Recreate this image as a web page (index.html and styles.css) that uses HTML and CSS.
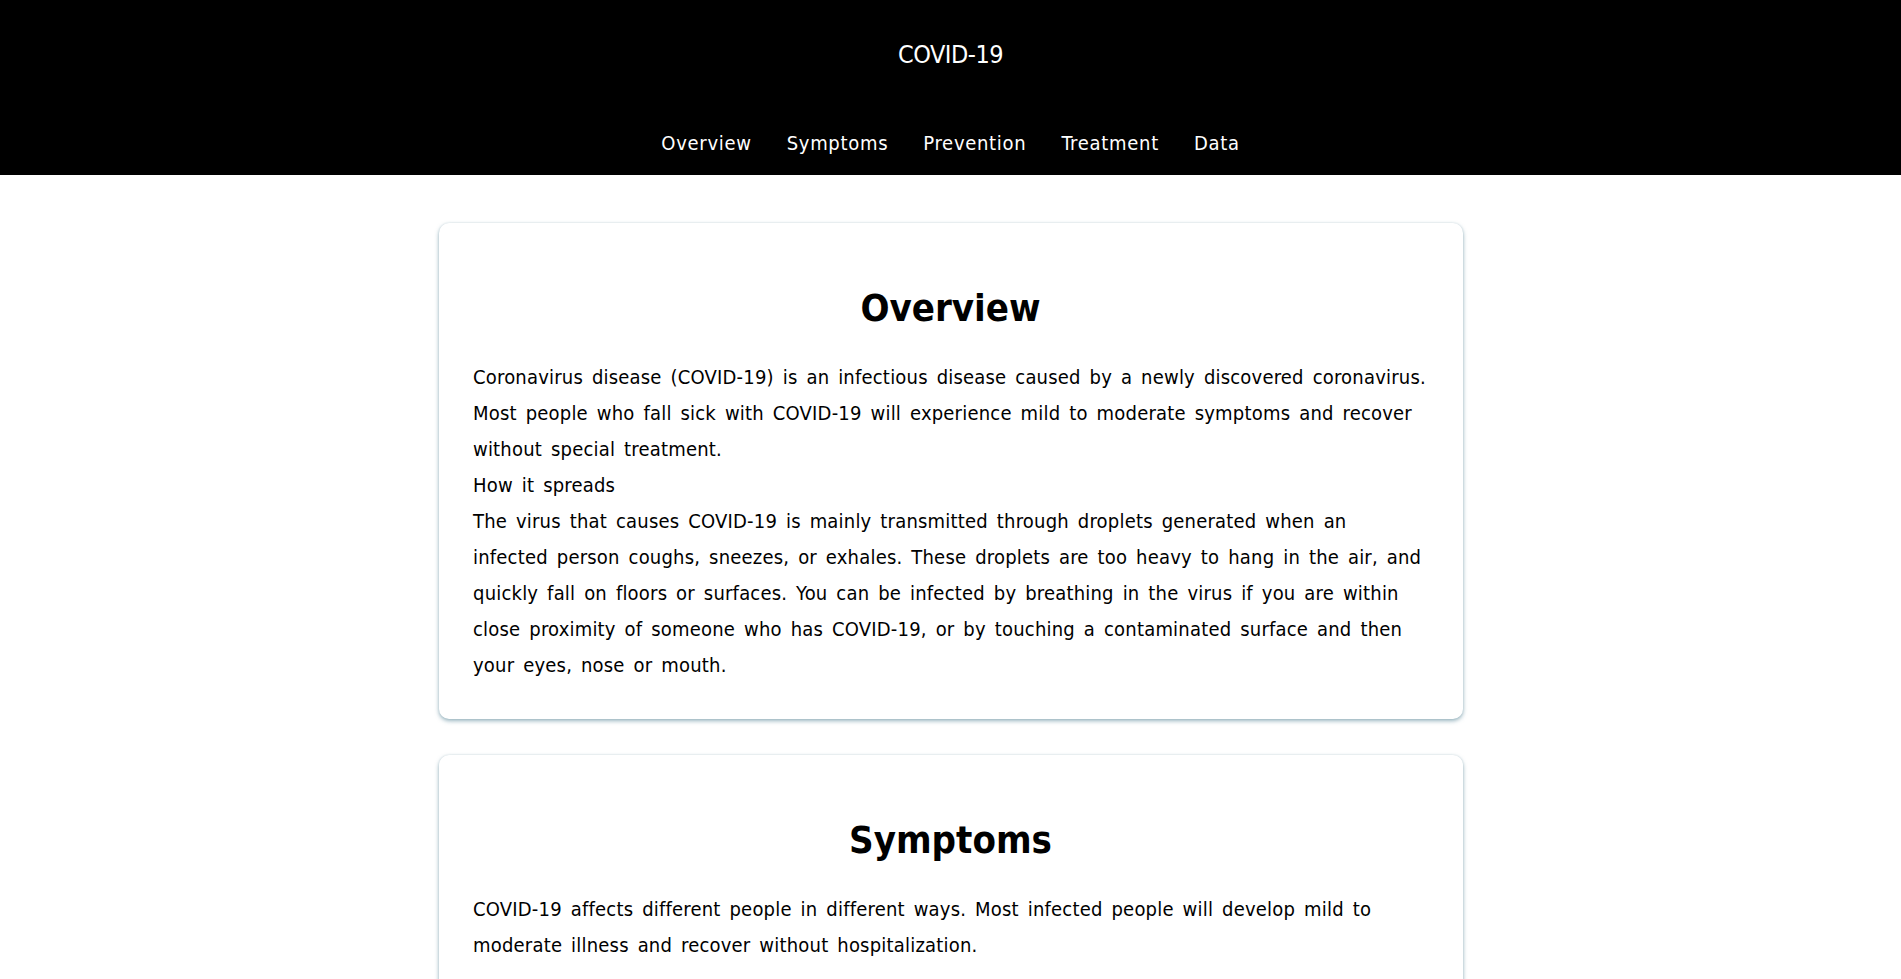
FILE: index.html
```html
<!DOCTYPE html>
<html lang="en">
<head>
<meta charset="utf-8">
<title>COVID-19</title>
<link rel="stylesheet" href="styles.css">
</head>
<body>
<header class="site-header">
  <h1 class="site-title">COVID-19</h1>
  <nav class="site-nav">
    <a href="#overview">Overview</a>
    <a href="#symptoms">Symptoms</a>
    <a href="#prevention">Prevention</a>
    <a href="#treatment">Treatment</a>
    <a href="#data">Data</a>
  </nav>
</header>
<main class="content">
  <section class="card" id="overview">
    <h2 class="card-title">Overview</h2>
    <p class="card-text">Coronavirus disease (COVID-19) is an infectious disease caused by a newly discovered coronavirus. Most people who fall sick with COVID-19 will experience mild to moderate symptoms and recover without special treatment.</p>
    <p class="card-text">How it spreads</p>
    <p class="card-text">The virus that causes COVID-19 is mainly transmitted through droplets generated when an infected person coughs, sneezes, or exhales. These droplets are too heavy to hang in the air, and quickly fall on floors or surfaces. You can be infected by breathing in the virus if you are within close proximity of someone who has COVID-19, or by touching a contaminated surface and then your eyes, nose or mouth.</p>
  </section>
  <section class="card" id="symptoms">
    <h2 class="card-title">Symptoms</h2>
    <p class="card-text">COVID-19 affects different people in different ways. Most infected people will develop mild to moderate illness and recover without hospitalization.</p>
  </section>
</main>
</body>
</html>
```
FILE: styles.css
```css
html, body {
  margin: 0;
  padding: 0;
  background: #ffffff;
}

body {
  font-family: "DejaVu Sans Condensed", "DejaVu Sans", sans-serif;
  color: #000;
}

.site-header {
  background: #000;
  color: #fff;
  text-align: center;
  padding: 38px 0 17px;
}

.site-title {
  margin: 0;
  font-size: 25px;
  line-height: 34px;
  font-weight: 400;
  letter-spacing: -0.5px;
}

.site-nav {
  margin-top: 56px;
  display: flex;
  justify-content: center;
  gap: 35px;
}

.site-nav a {
  color: #fff;
  text-decoration: none;
  font-size: 20px;
  line-height: 30px;
  letter-spacing: 0.7px;
}

.content {
  display: flex;
  flex-direction: column;
  align-items: center;
  gap: 36px;
  padding: 48px 0 48px;
}

.card {
  box-sizing: border-box;
  width: 1024px;
  padding: 36px 34.5px;
  background: #fff;
  border-radius: 10px;
  box-shadow: 0 2px 4px rgba(70, 120, 140, 0.55), 0 0 2px rgba(70, 120, 140, 0.18);
}

.card-title {
  margin: 25px 0 27px;
  text-align: center;
  font-size: 38px;
  line-height: 48px;
  font-weight: 700;
}

.card-text {
  margin: 0;
  font-size: 20px;
  line-height: 36px;
  letter-spacing: 0.2px;
  word-spacing: 3px;
}
```
